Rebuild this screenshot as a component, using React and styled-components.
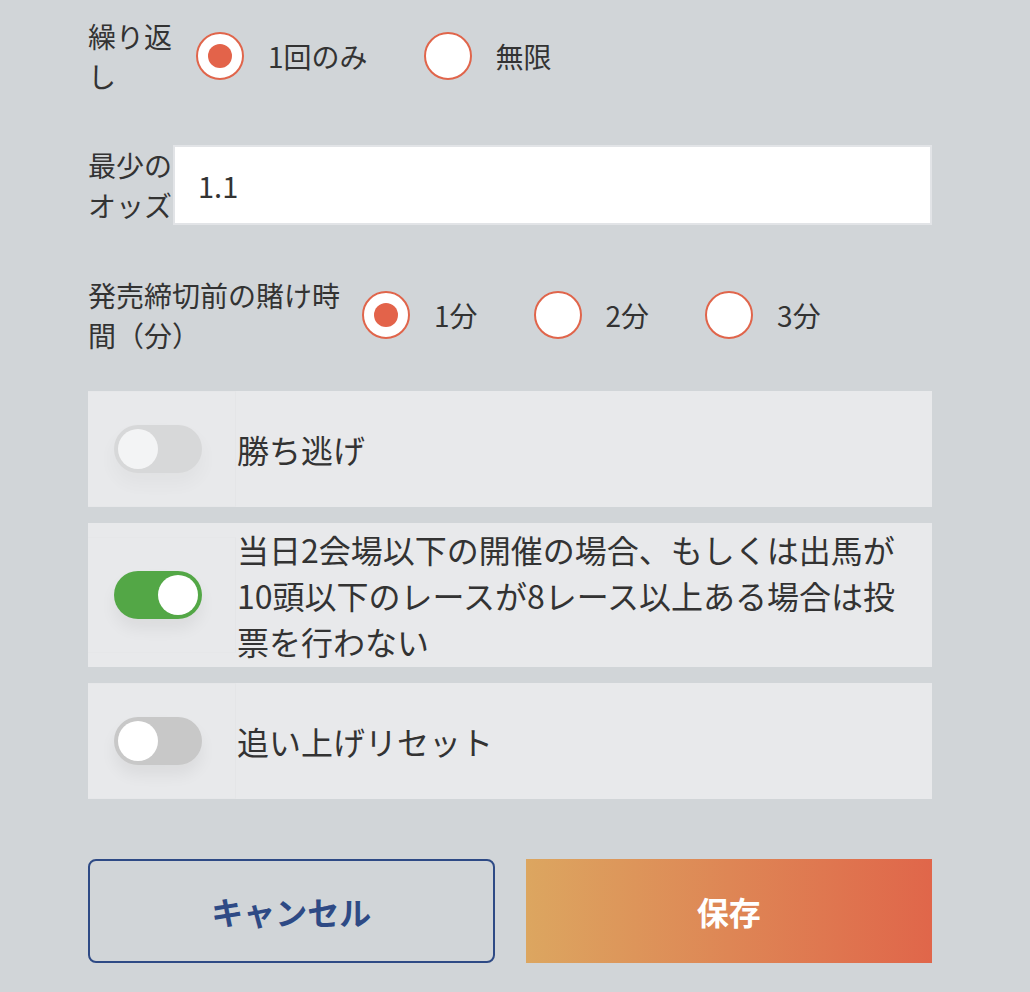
import React, { useState } from 'react'
import styled, { createGlobalStyle } from 'styled-components'

const GlobalStyle = createGlobalStyle`
  html, body {
    margin: 0;
    padding: 0;
    background: #d1d5d8;
  }
  body {
    font-family: "Noto Sans CJK JP", "Noto Sans", sans-serif;
    color: #333333;
  }
`

function Radio({ checked, label }) {
  return (
    <RadioItem>
      <RadioCircle>{checked && <RadioDot />}</RadioCircle>
      <RadioText>{label}</RadioText>
    </RadioItem>
  )
}

function ToggleRow({ on, disabled, children }) {
  return (
    <Panel>
      <SwitchCell>
        <Track on={on} disabled={disabled}>
          <Knob on={on} />
        </Track>
      </SwitchCell>
      <PanelText>{children}</PanelText>
    </Panel>
  )
}

export default function App() {
  const [odds, setOdds] = useState('1.1')

  return (
    <Page>
      <GlobalStyle />
      <Row mb={49}>
        <Label w={84}>繰り返し</Label>
        <Radios gap={24}>
          <Radio checked label="1回のみ" />
          <Radio label="無限" />
        </Radios>
      </Row>

      <Row mb={50}>
        <Label w={85}>最少のオッズ</Label>
        <OddsInput value={odds} onChange={(e) => setOdds(e.target.value)} />
      </Row>

      <Row mb={36}>
        <Label w={256}>発売締切前の賭け時間（分）</Label>
        <Radios gap={18}>
          <Radio checked label="1分" />
          <Radio label="2分" />
          <Radio label="3分" />
        </Radios>
      </Row>

      <Panels>
        <ToggleRow disabled>勝ち逃げ</ToggleRow>
        <ToggleRow on>
          当日2会場以下の開催の場合、もしくは出馬が10頭以下のレースが8レース以上ある場合は投票を行わない
        </ToggleRow>
        <ToggleRow>追い上げリセット</ToggleRow>
      </Panels>

      <Buttons>
        <CancelButton>キャンセル</CancelButton>
        <SaveButton>保存</SaveButton>
      </Buttons>
    </Page>
  )
}

const Page = styled.div`
  width: 844px;
  padding: 16px 0 29px 88px;
`

const Row = styled.div`
  display: flex;
  align-items: center;
  margin-bottom: ${(p) => p.mb}px;
`

const Label = styled.div`
  width: ${(p) => p.w}px;
  flex-shrink: 0;
  font-size: 28px;
  line-height: 40px;
  color: #333333;
  word-break: break-all;
`

const Radios = styled.div`
  display: flex;
  align-items: center;
  padding-left: ${(p) => p.gap}px;
`

const RadioItem = styled.label`
  display: flex;
  align-items: center;
  gap: 24px;
  margin-right: 56px;
`

const RadioCircle = styled.span`
  box-sizing: border-box;
  width: 48px;
  height: 48px;
  border-radius: 50%;
  border: 2px solid #e0654b;
  background: #ffffff;
  display: flex;
  align-items: center;
  justify-content: center;
`

const RadioDot = styled.span`
  width: 24px;
  height: 24px;
  border-radius: 50%;
  background: #e3634a;
`

const RadioText = styled.span`
  font-size: 28px;
  line-height: 40px;
  color: #333333;
`

const OddsInput = styled.input`
  box-sizing: border-box;
  flex: 1;
  min-width: 0;
  height: 80px;
  margin: 0;
  border: 2px solid #e2e4e7;
  background: #ffffff;
  padding: 0 23px;
  font-family: "Noto Sans CJK JP", "Noto Sans", sans-serif;
  font-size: 29px;
  color: #333333;
  outline: none;
`

const Panels = styled.div`
  display: flex;
  flex-direction: column;
  gap: 16px;
`

const Panel = styled.div`
  display: flex;
  align-items: center;
  min-height: 116px;
  background: #e8e9eb;
`

const SwitchCell = styled.div`
  box-sizing: border-box;
  flex-shrink: 0;
  width: 148px;
  height: 116px;
  padding-left: 26px;
  display: flex;
  align-items: center;
  border-right: 1px solid #e4e5e7;
  border-top: 1px solid #e6e7e9;
  border-bottom: 1px solid #e6e7e9;
`

const Track = styled.div`
  position: relative;
  width: 88px;
  height: 48px;
  border-radius: 24px;
  background: ${(p) => (p.on ? '#53a746' : '#c8c8c8')};
  box-shadow: 0 10px 16px rgba(0, 0, 0, 0.06);
  opacity: ${(p) => (p.disabled ? 0.5 : 1)};
`

const Knob = styled.div`
  position: absolute;
  top: 4px;
  left: ${(p) => (p.on ? '44px' : '4px')};
  width: 40px;
  height: 40px;
  border-radius: 50%;
  background: #ffffff;
`

const PanelText = styled.div`
  flex: 1;
  padding: 3px 30px 3px 1px;
  font-size: 32px;
  line-height: 46px;
  color: #333333;
`

const Buttons = styled.div`
  display: grid;
  grid-template-columns: 1fr 1fr;
  gap: 31px;
  margin-top: 60px;
`

const CancelButton = styled.button`
  box-sizing: border-box;
  height: 104px;
  border: 2px solid #2e4a85;
  border-radius: 8px;
  background: transparent;
  color: #2e4a85;
  font-family: "Noto Sans CJK JP", "Noto Sans", sans-serif;
  font-size: 32px;
  font-weight: 700;
`

const SaveButton = styled.button`
  height: 104px;
  border: none;
  background: linear-gradient(90deg, #dca660 0%, #e0664a 100%);
  color: #ffffff;
  font-family: "Noto Sans CJK JP", "Noto Sans", sans-serif;
  font-size: 32px;
  font-weight: 700;
`
